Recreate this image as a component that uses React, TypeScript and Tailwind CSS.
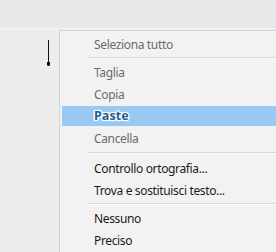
import React from 'react';

type Item =
  | { kind: 'item'; label: string; disabled?: boolean; active?: boolean }
  | { kind: 'sep'; h: string };

const items: Item[] = [
  { kind: 'item', label: 'Seleziona tutto', disabled: true },
  { kind: 'sep', h: 'h-[6px]' },
  { kind: 'item', label: 'Taglia', disabled: true },
  { kind: 'item', label: 'Copia', disabled: true },
  { kind: 'item', label: 'Paste', active: true },
  { kind: 'item', label: 'Cancella', disabled: true },
  { kind: 'sep', h: 'h-[8px]' },
  { kind: 'item', label: 'Controllo ortografia...' },
  { kind: 'item', label: 'Trova e sostituisci testo...' },
  { kind: 'sep', h: 'h-[6px]' },
  { kind: 'item', label: 'Nessuno' },
  { kind: 'item', label: 'Preciso' },
];

function MenuRow({ item }: { item: Item }) {
  if (item.kind === 'sep') {
    return (
      <div className={`${item.h} flex flex-col justify-center pl-[26px]`}>
        <div className="h-px bg-[#d9d9d9]" />
        <div className="h-px bg-[#fbfbfb]" />
      </div>
    );
  }
  if (item.active) {
    return (
      <div className="h-[22px] py-px">
        <div className="h-full bg-[#99c9f3] flex items-center pl-[32px] pt-px">
          <span className="font-bold text-[12.5px] text-[#245f93] tracking-[0.1px] [text-shadow:1px_0_0_#fff,-1px_0_0_#fff,0_1px_0_#fff,0_-1px_0_#fff,1px_1px_1px_#fff,-1px_-1px_1px_#fff,1px_-1px_1px_#fff,-1px_1px_1px_#fff]">
            {item.label}
          </span>
        </div>
      </div>
    );
  }
  return (
    <div
      className={`h-[22px] flex items-center pl-[32px] pt-px tracking-[-0.35px] ${
        item.disabled ? 'text-[#6b6b6b]' : 'text-[#1b1b1b]'
      }`}
    >
      {item.label}
    </div>
  );
}

export default function App() {
  return (
    <div
      className="w-[276px] h-[252px] overflow-hidden bg-[#ececed] relative text-[12px]"
      style={{ fontFamily: '"Noto Sans", "Open Sans", sans-serif' }}
    >
      {/* text cursor */}
      <div className="absolute left-[48px] top-[40px] w-px h-[26px] bg-[#111]" />
      <div className="absolute left-[47px] top-[62px] w-[3px] h-[4px] bg-[#111] rounded-b-sm" />

      <div className="h-[29px] bg-[#e8e8ea] border-b border-[#f3f3f3]" />
      <div className="ml-[59px] mt-px border-l border-t border-[#d3d3d5] bg-[#f2f2f2] pl-[2px] pt-[2px] h-[230px]">
        {items.map((it, i) => (
          <MenuRow key={i} item={it} />
        ))}
      </div>
    </div>
  );
}
